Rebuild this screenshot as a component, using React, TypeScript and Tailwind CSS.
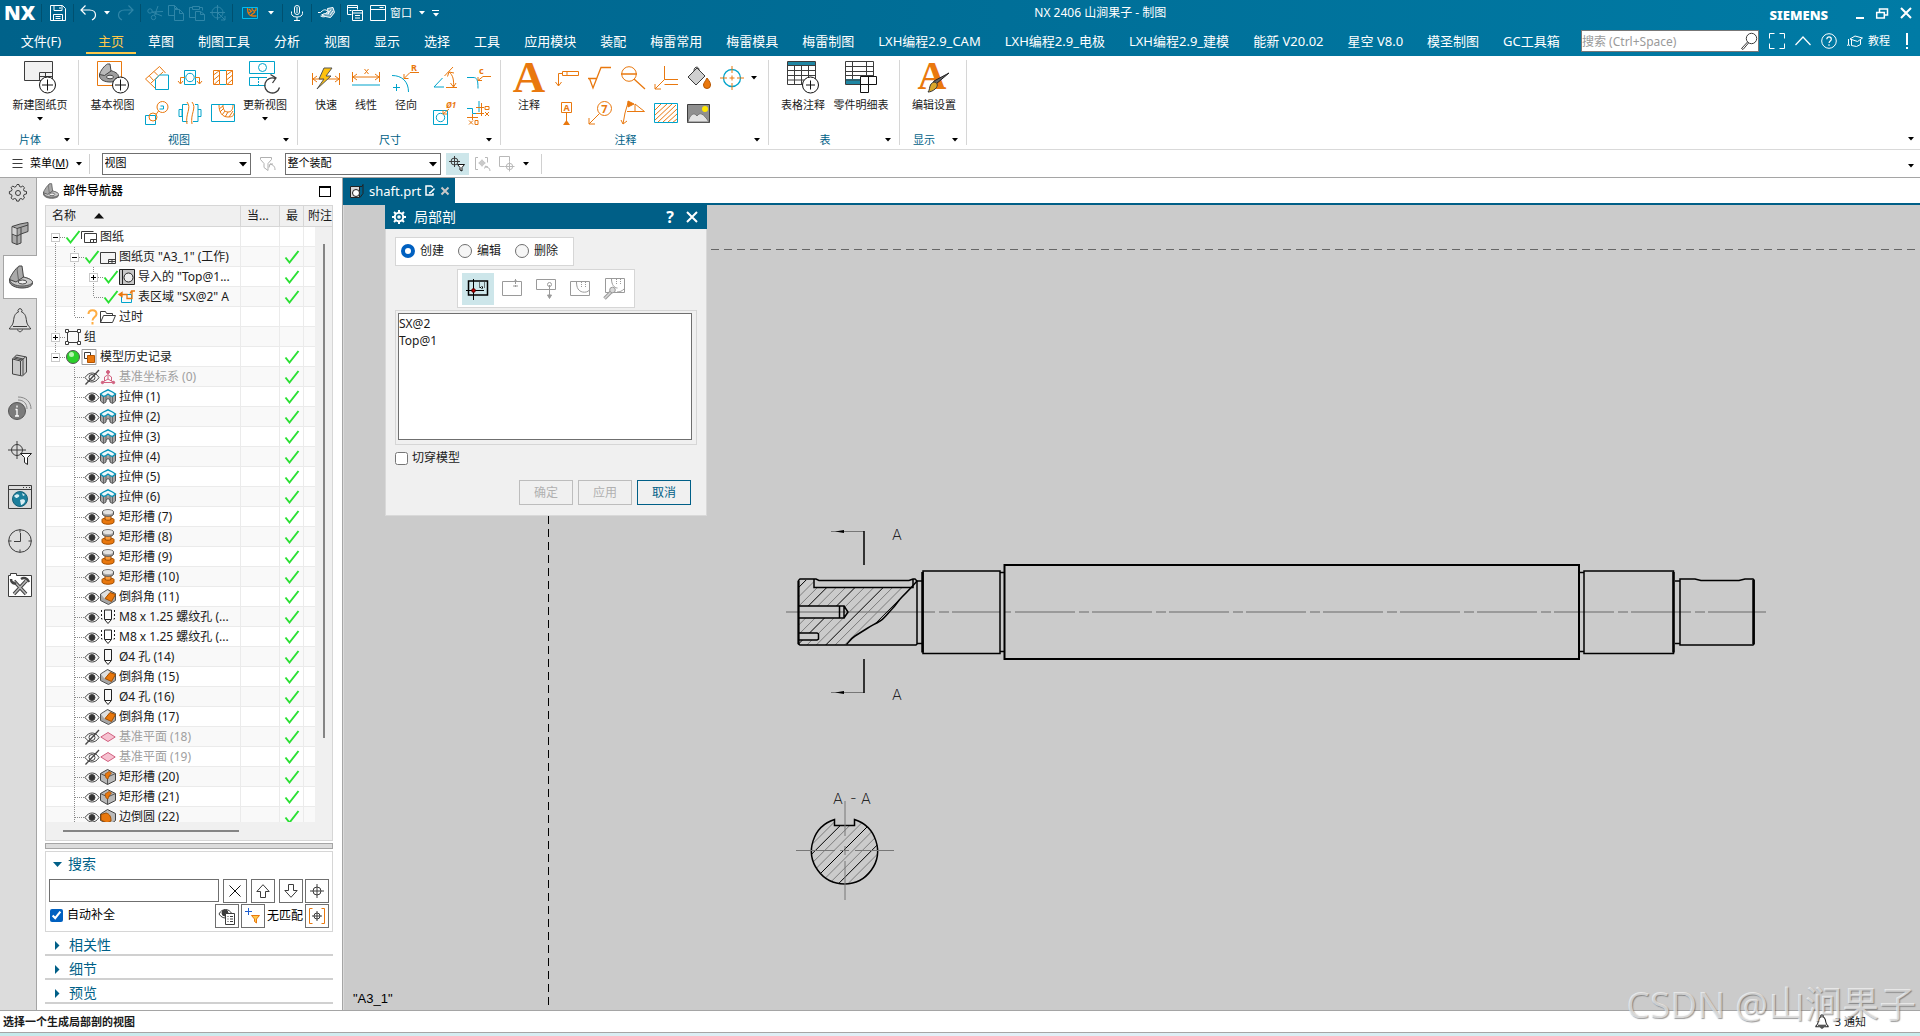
import type { ReactNode } from "react";
import clsx from "clsx";

const OR = "#e9780e";
const CY = "#00a3cb";
const DK = "#3c3c3c";

type IconProps = {
  w?: number;
  h?: number;
  stroke?: string;
  sw?: number;
  className?: string;
  children: ReactNode;
};

function Icon({ w = 16, h = w, stroke = DK, sw = 1, className, children }: IconProps) {
  return (
    <svg
      width={w}
      height={h}
      viewBox={`0 0 ${w} ${h}`}
      fill="none"
      stroke={stroke}
      strokeWidth={sw}
      className={clsx("shrink-0 overflow-visible", className)}
      aria-hidden
    >
      {children}
    </svg>
  );
}

function Caret({ className = "text-black" }: { className?: string }) {
  return (
    <svg width="6" height="4" viewBox="0 0 6 4" className={clsx("shrink-0", className)} aria-hidden>
      <path d="M0 0h6L3 3.6z" fill="currentColor" />
    </svg>
  );
}

/* ---------- Title bar ---------- */

const Sep = () => <span className="h-[18px] w-px shrink-0 bg-[#00506f]" />;

const SaveIcon = () => (
  <Icon stroke="#fff">
    <path d="M.5.5h12l3 3v12H.5zM4 .5v5h8v-5M3.5 15.5v-6h9v6M5.5 11.5h5M5.5 13.5h5M10 2v2" />
  </Icon>
);
const UndoIcon = () => (
  <Icon stroke="#fff" sw={1.2}>
    <path d="M5.5.5 1 5l4.5 4.5M1 5h8.500c4 0 6 2.500 6 5s-1.500 4-3.500 5" />
  </Icon>
);
const RedoIcon = () => (
  <Icon stroke="#2f86a8" sw={1.2}>
    <path d="M10.5.5 15 5l-4.500 4.500M15 5H6.500c-4 0-6 2.500-6 5s1.500 4 3.500 5" />
  </Icon>
);
const CutIcon = () => (
  <Icon stroke="#2f86a8">
    <circle cx="3" cy="6" r="2.2" />
    <circle cx="6.5" cy="12.5" r="2.2" />
    <path d="m5 7 11-.5M7.500 10.500 11 1M5 7l10 4M9 7v3" />
  </Icon>
);
const CopyIcon = () => (
  <Icon stroke="#2f86a8">
    <path d="M6.500 10.500h-6V.5h6l3 3v1M6.500.5v3h3M6.500 4.500h5l4 4v7h-9zM11.500 4.500v4h4" />
  </Icon>
);
const PasteIcon = () => (
  <Icon stroke="#2f86a8">
    <path d="M6.500 12.500h-6v-10h3M10.500 2.500h3v3M3.500 1.500h7v3h-7zM6.500 6.500h5l4 3v6h-9zM11.500 6.500v3h4" />
  </Icon>
);
const TargetIcon = () => (
  <Icon stroke="#2f86a8">
    <circle cx="7.5" cy="7.5" r="5.5" />
    <path d="M7.500 0v15M0 7.500h15M8 8l7 7M15 11v4h-4" />
  </Icon>
);
const SectionIcon = () => (
  <Icon w={16} h={12}>
    <path d="M.5.5h15v11H.5z" stroke="#00bdf2" />
    <path d="M5.500 1c0 6 2 8 5 8h4M10 1c0 3 3 4 4 2V1M7 2l2 2M7 6l3-2M9 8l4-3" stroke={OR} strokeWidth="1.3" />
  </Icon>
);
const MicIcon = () => (
  <Icon w={12} h={16} stroke="#fff">
    <rect x="3.5" y=".5" width="5" height="9" rx="2.5" />
    <path d="M.5 6.500v2c0 2 2 3.500 5.500 3.500s5.500-1.500 5.500-3.500v-2M6 12v3M3 15.500h6M5 3h2M5 5h2M5 7h2" />
  </Icon>
);
const TouchIcon = () => (
  <Icon w={17} h={14} stroke="#fff">
    <path d="M0 6.500h2.500C5 4 6 3.500 8 4l2.500 1.500L8 7M2.500 10c2 1 3 1 5 .5" />
    <path d="m9.500 2.500 5.500-1 1.500 5-4 5-5-1-4-1.500 3-1.500 4 .5z" fill="#ffffff66" />
    <path d="m10 8 3-4.500M12 9l3-4" />
  </Icon>
);
const CascadeIcon = () => (
  <Icon stroke="#fff">
    <path d="M4.500 9.500h-4V.5h10v4M.5 2.500h10M5.500 5.500h10v10h-10zM5.500 8h10M8 10.500h5M2.500 5.500h2M8 13h5" />
  </Icon>
);
const WindowIcon = () => (
  <Icon stroke="#fff">
    <path d="M.5.5h15v15H.5zM.5 4.500h15M9.500 2.500h4" />
  </Icon>
);

function TitleButton({ label, children }: { label: string; children: ReactNode }) {
  return (
    <button aria-label={label} className="flex h-5 shrink-0 items-center justify-center">
      {children}
    </button>
  );
}

function TitleBar() {
  return (
    <div className="flex h-[26px] items-center pr-2 pl-1 text-white">
      <span className="w-[37px] text-[20px] leading-[26px] font-black">NX</span>
      <Sep />
      <div className="flex w-[31px] justify-center"><TitleButton label="保存"><SaveIcon /></TitleButton></div>
      <Sep />
      <div className="flex w-[66px] items-center justify-between px-[6px]">
        <TitleButton label="撤消"><UndoIcon /></TitleButton>
        <Caret className="text-white" />
        <TitleButton label="重做"><RedoIcon /></TitleButton>
      </div>
      <Sep />
      <div className="flex w-[91px] items-center justify-between px-[6px]">
        <TitleButton label="剪切"><CutIcon /></TitleButton>
        <TitleButton label="复制"><CopyIcon /></TitleButton>
        <TitleButton label="粘贴"><PasteIcon /></TitleButton>
        <TitleButton label="移动"><TargetIcon /></TitleButton>
      </div>
      <Sep />
      <div className="flex w-[49px] items-center justify-center gap-[10px]">
        <TitleButton label="局部剖"><SectionIcon /></TitleButton>
        <Caret className="text-white" />
      </div>
      <Sep />
      <div className="flex w-[28px] justify-center"><TitleButton label="语音"><MicIcon /></TitleButton></div>
      <Sep />
      <div className="flex w-[28px] justify-center"><TitleButton label="触控"><TouchIcon /></TitleButton></div>
      <Sep />
      <div className="flex items-center gap-[7px] pl-[6px]">
        <TitleButton label="层叠"><CascadeIcon /></TitleButton>
        <button className="flex items-center gap-1 text-[11px] leading-4">
          <WindowIcon />
          窗口
        </button>
        <Caret className="text-white" />
        <button aria-label="自定义" className="flex flex-col items-center gap-[2px]">
          <span className="h-px w-[7px] bg-white" />
          <Caret className="text-white" />
        </button>
      </div>
      <h1 className="flex-1 pr-2 text-center text-xs leading-4">NX 2406 山涧果子 - 制图</h1>
      <span className="mr-7 pt-1 text-[13px] leading-4 font-black">SIEMENS</span>
      <div className="flex items-center gap-3">
        <button aria-label="最小化" className="flex h-3 w-2 items-end"><span className="h-[2px] w-2 bg-white" /></button>
        <button aria-label="还原">
          <Icon w={12} h={11} stroke="#fff" sw={1.5}>
            <path d="M3.500 4V1h8v6h-3M.7 4.500h7.600v5.500H.7z" />
          </Icon>
        </button>
        <button aria-label="关闭">
          <Icon w={12} h={12} stroke="#fff" sw={2}>
            <path d="m1 1 10 10M11 1 1 11" />
          </Icon>
        </button>
      </div>
    </div>
  );
}

const TABS = [
  "主页", "草图", "制图工具", "分析", "视图", "显示", "选择", "工具", "应用模块", "装配",
  "梅雷常用", "梅雷模具", "梅雷制图", "LXH编程2.9_CAM", "LXH编程2.9_电极", "LXH编程2.9_建模",
  "能新 V20.02", "星空 V8.0", "模圣制图", "GC工具箱",
];

function MenuTabs() {
  return (
    <div className="flex h-[30px] text-[13px] leading-[30px] text-white">
      <button className="w-[82px] shrink-0">文件(F)</button>
      <nav className="ml-1 flex whitespace-nowrap">
        {TABS.map((t, i) => (
          <a
            key={t}
            href="#"
            className={clsx("h-7 px-3", i === 0 && "border-b-2 border-[#ffc84a] text-[#ffc84a]")}
          >
            {t}
          </a>
        ))}
      </nav>
      <div className="ml-auto flex items-center gap-[10px] pr-3 text-[11px]">
        <label className="flex h-[22px] w-[178px] items-center border border-[#777] bg-white">
          <input
            aria-label="搜索"
            placeholder="搜索 (Ctrl+Space)"
            className="h-5 w-0 flex-1 text-xs text-black outline-none placeholder:text-[#9a9a9a]"
          />
          <Icon w={18}>
            <circle cx="11.5" cy="6.5" r="5.2" />
            <path d="m7.500 10-6 6.500 1.500 1L8.500 11" />
          </Icon>
        </label>
        <button aria-label="全屏">
          <Icon stroke="#fff"><path d="M.5 5.500v-5h5M10.500.5h5v5M15.500 10.500v5h-5M5.500 15.500h-5v-5" /></Icon>
        </button>
        <button aria-label="折叠">
          <Icon stroke="#fff" sw={1.2}><path d="m.5 12 7.500-8 7.500 8" /></Icon>
        </button>
        <button aria-label="帮助">
          <Icon stroke="#fff">
            <circle cx="8" cy="8" r="7.3" />
            <path d="M5.800 6.200c0-3 4.500-3 4.500 0 0 1.800-2.200 1.800-2.200 3.800M8 11.200v1.500" strokeWidth="1.2" />
          </Icon>
        </button>
        <button className="flex items-center gap-[5px]">
          <Icon stroke="#fff">
            <path d="m3 6 5-3 7.500 2-5 3.500zM4.500 7v5.500l5 1 4-2V7M1.500 6v5M.5 13l1-2 1 2" />
          </Icon>
          教程
        </button>
        <span className="ml-[6px] flex flex-col items-center gap-[2px]" aria-label="提示">
          <span className="h-3 w-[2px] bg-white" />
          <span className="size-[2px] bg-white" />
        </span>
      </div>
    </div>
  );
}

/* ---------- Ribbon icons ---------- */

const NewSheetIcon = () => (
  <Icon w={32}>
    <path d="M.5.5h28v19H.5z" fill="#f1f1f1" />
    <path d="M15.500 19.500v-8h13M15.500 15.500h13M21.500 11.500v8" />
    <circle cx="23.5" cy="24" r="8" fill="#fff" stroke="#111" />
    <path d="M18 24h11M23.500 18.500v11" stroke="#111" />
  </Icon>
);
const BaseViewIcon = () => (
  <Icon w={32}>
    <path d="M.5.5h24v24H.5z" stroke={OR} />
    <path d="M13.500 9.500c4 1 8 3 8 6 0 4-4 5.500-8.500 5.500-5 0-10-2-10.500-6v-2z" fill="#9d9d9d" stroke="#444" />
    <path d="M2.500 13.500c1-4 5-9 8-10.500h2.500l1 7-6.500 4.500z" fill="#b9b9b9" stroke="#444" />
    <ellipse cx="13" cy="16" rx="3.5" ry="1.8" fill="#eee" stroke="#444" />
    <circle cx="23.5" cy="24" r="8" fill="#fff" stroke="#111" />
    <path d="M18 24h11M23.500 18.500v11" stroke="#111" />
  </Icon>
);
const UpdateViewIcon = () => (
  <Icon w={32} stroke={CY}>
    <path d="M.5.5h25v12H.5zM18 16.500H.5v8h16" />
    <circle cx="13.5" cy="6.500" r="4" />
    <path d="M9.500 17v8" strokeDasharray="2 1" />
    <path d="M26 17.500a7.500 7.500 0 1 0 4.500 9M21.500 13.500l5.500 3.500-3.500 5" stroke={DK} strokeWidth="1.3" />
  </Icon>
);
const RapidDimIcon = () => (
  <Icon w={32} stroke={OR}>
    <path d="M2.500 12v12M29.500 12v12M3 18h26M7 15l-4 3 4 3M25 15l4 3-4 3" />
    <path d="m14 7-5 11h5l-7 10 14-13h-5l6-8z" fill="#ffc20e" stroke="#555" />
  </Icon>
);
const LinearDimIcon = () => (
  <Icon w={32} stroke={OR}>
    <path d="M2.500 11v10M29.500 11v10M3 16h26M7 13l-4 3 4 3M25 13l4 3-4 3M14.500 8l4 5M18.500 8l-4 5" />
    <path d="M2 24h28" stroke={CY} />
  </Icon>
);
const RadialDimIcon = () => (
  <Icon w={32} stroke={OR}>
    <path d="M2 14.500c10 0 16.500 6 16.500 16.500M3 26.500h7M6.500 23v7" stroke={CY} />
    <path d="M29 11.500h-9l-6 6M14 13v4.500h4.500" />
    <text x="21" y="10" fontSize="9" fontWeight="700" fill={OR} stroke="none">R</text>
  </Icon>
);
const NoteIcon = () => (
  <Icon w={32}>
    <text x="16" y="30.5" textAnchor="middle" fontSize="45" className="font-[Liberation_Serif]" fontWeight="700" fill={OR} stroke="none">A</text>
  </Icon>
);
const TableNoteIcon = () => (
  <Icon w={32}>
    <path d="M.5.5h28v23H.5z" fill="#fff" />
    <path d="M1 1h27v3H1z" fill="#1f86a3" stroke="none" />
    <path d="M.5 4.500h28M.5 9.500h28M.5 14.500h28M.5 19h28M7.500 4v19M14.500 4v19M21.500 4v19" />
    <circle cx="23.5" cy="24" r="8" fill="#fff" stroke="#111" />
    <path d="M19 24h9M23.500 19.500v9" stroke="#111" />
  </Icon>
);
const PartsListIcon = () => (
  <Icon w={32}>
    <path d="M.5.5h28v23H.5z" fill="#fff" />
    <path d="M1 18h15v5H1z" fill="#1f86a3" stroke="none" />
    <path d="M.5 5.500h28M.5 10.500h28M.5 14.500h28M.5 19h15M7.500 0v18M21.500 0v14" />
    <path d="M15.500 15.500h16v8h-8v8h-8zM15.500 23.500h8M23.500 15.500v8" fill="#fff" stroke="#111" />
  </Icon>
);
const EditSettingsIcon = () => (
  <Icon w={32}>
    <text x="14" y="27.5" textAnchor="middle" fontSize="40" className="font-[Liberation_Serif]" fontWeight="700" fill={OR} stroke="none">A</text>
    <path d="m31 12-13 11-3-1 1-2z" fill="#666" stroke="#222" />
    <path d="M17 21c3 1 3 5 0 7-2 2-5 3-7 3 2-2 1-5 3-8 1-1 2-2 4-2z" fill="#d9a72b" stroke="#333" />
  </Icon>
);

const VIEW_ICONS: ReactNode[] = [
  <>
    <path d="M10.500 22.500.5 13 14.500.5l6 6.500M4.500 10l4 4.500M9 5.500l4 4M6 17l12-11" stroke={OR} />
    <path d="M10.500 13.500l4-4.500h9v14.500h-13z" stroke={CY} fill="#fff" />
  </>,
  <>
    <path d="M6.500 4.500h11v14h-11z" stroke={CY} />
    <circle cx="12" cy="11.5" r="4.2" stroke={CY} />
    <path d="M7 11.500H2.500v6M17 11.500h4.500v6M0 15l2.500 3L5 15M19 15l2.500 3 2.500-3" stroke={OR} />
  </>,
  <>
    <path d="M2.500 4.500h6v14h-6zM15.500 4.500h6v14h-6zM2.500 9l6-4.500M2.500 14l6-5M3 18.500l5.500-5M15.500 9l6-4.500M15.500 14l6-5M16 18.500l5.500-5" stroke={OR} />
    <path d="M9 4.500h6M9 18.500h6" stroke={CY} />
  </>,
  <>
    <path d="M.5 14.500h10v9H.5z" stroke={CY} />
    <circle cx="17.5" cy="6" r="5.5" stroke={OR} />
    <circle cx="8" cy="16" r="4" stroke={OR} />
    <path d="m11 13.500 2.500-3.500" stroke={OR} />
    <path d="M14.500 8h4V5h-3" stroke={CY} />
  </>,
  <>
    <path d="M1 8.500h3v7H1zM4.500 3.500h5M4.500 3.500v17h5M17 3.500h3v17h-5M20 8.500h3v7h-3" stroke={CY} />
    <path d="M9 1c5 6-2 12 0 22M14 1c5 6-2 12 0 22" stroke={OR} />
  </>,
  <>
    <path d="M.5 3.500h23v17H.5z" stroke={CY} />
    <path d="M8 4c0 7 3 12 9 12 4 0 6-1 6-4M12 4c0 5 2 7 5 7s5-2 5-7M8 8l4-3M9 11l4-4M11 14l3-4M14 16l3-5M18 16l4-6" stroke={OR} />
  </>,
];

const DIM_ICONS: ReactNode[] = [
  <>
    <path d="M9.500 12 1 21h10" stroke={CY} />
    <path d="M13 21.500h11M11.500 10 20 1M16 6c4 3 5 8 4.500 15M14.500 10.500 16 6l5 1M17.500 17l3 4 2.500-4" stroke={OR} />
  </>,
  <>
    <path d="M0 11.500h6c4 0 5 2 5 11" stroke={CY} />
    <path d="M24 10.500h-8l-5 4M11 11v3.500h4" stroke={OR} />
    <text x="12" y="8" fontSize="9" fontWeight="700" fill={OR} stroke="none">c</text>
  </>,
  <>
    <path d="M.5 9.500h14v14H.5z" stroke={CY} />
    <circle cx="7.5" cy="16.5" r="4.2" stroke={CY} />
    <path d="m10 13 6-5M10 9.500V13h4" stroke={OR} />
    <text x="13" y="7" fontSize="8" fontWeight="700" fontStyle="italic" fill={OR} stroke="none">Ø1</text>
  </>,
  <>
    <path d="M0 7.500h5.500v5h5M12 0v11" stroke={CY} />
    <path d="M9 6.500h8M9 12.500h8M14.500 2v13M0 16.500h11M5.500 13v6M2 19.500l4 4M6 19.500l-4 4M8 19.500h3v4H8zM18 5.500h4v3h-4zM18 11l4 4M22 11l-4 4" stroke={OR} />
  </>,
];

const NOTE_ICONS: ReactNode[] = [
  <><path d="M7.500 5.500h16v4h-16zM12 5.500v4M7.500 7.500h-4v12M.5 16l3 4 3-4" stroke={OR} /></>,
  <><path d="M0 12.500h9M1.500 12.500 5 22 13 1.500h10" stroke={OR} strokeWidth="1.3" /></>,
  <><circle cx="8" cy="8" r="7.3" stroke={OR} /><path d="M0 8h16M13 13l11 10" stroke={OR} strokeWidth="1.3" /></>,
  <><path d="M10.500 0v13.500H24M10.500 18.500H24M10.500 13.500 1 23M1 18v5h6" stroke={OR} /></>,
  <>
    <path d="M1 11 10 2l8 8-9 9z" fill="#cfcfcf" stroke={DK} />
    <path d="M7 5C7 0 12 0 12 4" stroke={DK} />
    <path d="M20 12c3 4 3.500 5 3.500 7a3.500 3.500 0 0 1-7 0c0-2 1.500-3 3.500-7z" fill={OR} stroke="#b65500" />
  </>,
  <>
    <circle cx="12" cy="12" r="8.5" stroke={CY} strokeWidth="1.3" />
    <path d="M12 0v7M12 17v7M0 12h7M17 12h7M12 9.500v5M9.500 12h5" stroke={OR} />
  </>,
  <>
    <path d="M6.500 1.500h10v10h-10zM11.500 11.500v9" stroke={OR} />
    <path d="M11.500 19 15 24H8z" fill={OR} stroke="none" />
    <text x="11.5" y="10" textAnchor="middle" fontSize="9" fontWeight="700" fill={OR} stroke="none">A</text>
  </>,
  <>
    <circle cx="16.5" cy="7.5" r="7" stroke={OR} />
    <path d="M11.500 12.500 1 23M1 17v6h6" stroke={OR} />
    <text x="16.5" y="11.5" textAnchor="middle" fontSize="11" fontWeight="700" fill={OR} stroke="none">7</text>
  </>,
  <>
    <path d="M7.500 0 4 12l-2 11M0 19l2 4 4-3M6 10.500h17.500L14 3v7" stroke={OR} />
    <path d="m7 0 6 3-6 3z" fill={OR} stroke={OR} />
  </>,
  <>
    <path d="M1 14 13 3M1 19 18 3M3 22 22 4M8 22 23 8M13 22l10-9M18 22l5-4M1 9l6-6" stroke={OR} />
    <path d="M.5 2.500h23v19H.5z" stroke={CY} />
  </>,
  <>
    <path d="M.5 3.500h22v18H.5z" fill="#8f8f8f" stroke={DK} />
    <circle cx="18" cy="8" r="3" fill="#ffe600" stroke="none" />
    <path d="M1 21c2-8 6-10 9-6 3-4 6-3 12 6z" fill="#e2e2e2" stroke="#777" />
  </>,
];

function BigButton({ label, icon, caret, className }: { label: string; icon: ReactNode; caret?: boolean; className?: string }) {
  return (
    <button className={clsx("flex shrink-0 flex-col items-center pt-px text-[11px] leading-4 whitespace-nowrap text-[#1a1a1a]", className)}>
      {icon}
      <span className="mt-1">{label}</span>
      {caret && <span className="mt-1"><Caret /></span>}
    </button>
  );
}

function IconGrid({ icons, label, className }: { icons: ReactNode[]; label: string; className?: string }) {
  return (
    <div className={clsx("grid auto-rows-[35px]", className)}>
      {icons.map((ic, i) => (
        <button key={i} aria-label={`${label} ${i + 1}`} className="flex items-center justify-center">
          <Icon w={24}>{ic}</Icon>
        </button>
      ))}
    </div>
  );
}

function Group({ label, className, children }: { label: string; className?: string; children: ReactNode }) {
  return (
    <section className="flex h-full shrink-0 flex-col pt-1">
      <div className={clsx("flex h-[70px] items-start border-r border-[#d6d6d6]", className)}>{children}</div>
      <div className="flex h-[15px] items-center border-r border-[#d6d6d6] pr-2">
        <span className="flex-1 pt-1 pr-1 text-center text-[11px] leading-4 text-[#005f87]">{label}</span>
        <button aria-label={`${label}选项`} className="pt-1"><Caret /></button>
      </div>
    </section>
  );
}

function Ribbon() {
  return (
    <div className="flex h-[94px] border-b border-[#d9d9d9] bg-white">
      <Group label="片体" className="w-[79px] justify-center pl-[2px]">
        <BigButton label="新建图纸页" icon={<NewSheetIcon />} caret />
      </Group>
      <Group label="视图" className="pr-[6px] pl-[6px]">
        <BigButton label="基本视图" icon={<BaseViewIcon />} className="w-[55px]" />
        <IconGrid icons={VIEW_ICONS} label="视图" className="grid-cols-[33px_33px_33px]" />
        <BigButton label="更新视图" icon={<UpdateViewIcon />} caret className="w-[52px]" />
      </Group>
      <Group label="尺寸" className="pr-1 pl-2">
        <BigButton label="快速" icon={<RapidDimIcon />} className="w-10" />
        <BigButton label="线性" icon={<LinearDimIcon />} className="w-10" />
        <BigButton label="径向" icon={<RadialDimIcon />} className="w-10" />
        <IconGrid icons={DIM_ICONS} label="尺寸" className="ml-[2px] grid-cols-[34px_34px]" />
      </Group>
      <Group label="注释" className="pr-2 pl-[7px]">
        <BigButton label="注释" icon={<NoteIcon />} className="w-[42px]" />
        <IconGrid icons={NOTE_ICONS} label="注释" className="grid-cols-[33px_33px_33px_33px_33px_33px]" />
        <button aria-label="更多中心标记" className="flex h-[35px] w-3 items-center justify-center"><Caret /></button>
      </Group>
      <Group label="表" className="pr-2 pl-[6px]">
        <BigButton label="表格注释" icon={<TableNoteIcon />} className="w-[56px]" />
        <BigButton label="零件明细表" icon={<PartsListIcon />} className="w-[60px]" />
      </Group>
      <Group label="显示" className="pr-1 pl-[6px]">
        <BigButton label="编辑设置" icon={<EditSettingsIcon />} className="w-[56px]" />
      </Group>
      <button aria-label="功能区选项" className="mt-auto mr-[6px] mb-2 ml-auto"><Caret /></button>
    </div>
  );
}

function Combo({ label, value, className }: { label: string; value: string; className?: string }) {
  return (
    <div className={clsx("relative h-[22px]", className)}>
      <select aria-label={label} className="h-full w-full appearance-none border border-[#6f6f6f] bg-white pl-[2px] text-[11px] text-black">
        <option>{value}</option>
      </select>
      <svg width="8" height="5" className="pointer-events-none absolute top-[9px] right-1" aria-hidden>
        <path d="M0 0h8L4 4.500z" fill="#000" />
      </svg>
    </div>
  );
}

function SelectionBar() {
  return (
    <div className="flex h-7 items-center border-b border-[#a5a5a5] bg-white pl-3 text-[11px] text-black">
      <button className="flex items-center gap-[7px]">
        <Icon w={11} h={9}><path d="M.5.5h10M.5 4.500h10M.5 8.500h10" /></Icon>
        <span>菜单(<u>M</u>)</span>
        <Caret />
      </button>
      <span className="mr-3 ml-[7px] h-5 w-px bg-[#d0d0d0]" />
      <Combo label="过滤器" value="视图" className="w-[149px]" />
      <Icon stroke="#b0b0b0" className="mx-[9px]">
        <path d="M.5 1.500h11v2L8 7.500v7l-4-3v-4L.5 3.500zM10 8c3 1 5 2 5 6M9 11.500 10 8l3 0" />
      </Icon>
      <Combo label="范围" value="整个装配" className="w-[156px]" />
      <button aria-label="选择过滤" className="ml-[5px] flex h-[22px] w-[23px] items-center justify-center bg-[#cde6ea]">
        <Icon>
          <circle cx="5.5" cy="5.5" r="3.5" />
          <path d="M5.500 0v11M0 5.500h11" />
          <path d="M8.500 8.500h7l-2.500 3v3.500l-2-1v-2.500z" fill="#fff" stroke="#111" />
        </Icon>
      </button>
      <Icon stroke="#b8b8b8" className="ml-[6px]">
        <path d="M3 1.500H.5v12H3M10 1.500h2.500v5M3.500 7h7M7 3.500v7M10 11c3 0 5 1 5 4M9.500 12.500l1-2.500 2.500 1" />
        <circle cx="7" cy="7" r="2.2" />
      </Icon>
      <Icon stroke="#b8b8b8" className="mr-2 ml-2">
        <path d="M5.500 10.500h-5v-10h10v5M5.500 10.500h10M10.500 5.500v10" />
        <circle cx="10.5" cy="10.5" r="3.2" />
      </Icon>
      <button aria-label="更多"><Caret /></button>
      <span className="ml-[12px] h-5 w-px bg-[#d0d0d0]" />
      <button aria-label="边框条选项" className="mr-[6px] ml-auto pt-1"><Caret /></button>
    </div>
  );
}

/* ---------- Resource rail ---------- */

const BracketShape = () => (
  <>
    <path d="M14 12c5 1 9.500 3 9.500 6s-4.500 5-10.500 5S1 20.500.5 16.500V14z" fill="#8c8c8c" stroke="#444" />
    <path d="M14 12c5 1 9.500 3 9.500 5s-4.500 4-10.500 4S2 19 .8 15z" fill="#c9c9c9" stroke="#555" />
    <path d="M.5 14.500C2 10 6.500 3.500 10 1h3l1.500 11L7 17z" fill="#a9a9a9" stroke="#444" />
    <path d="M10 1 8 4l1.500 11" stroke="#666" />
    <ellipse cx="13.5" cy="17" rx="4.2" ry="2" fill="#eee" stroke="#444" />
  </>
);

const BellShape = () => (
  <path d="M10.500 3a2 2 0 1 1 3 0c4 1.500 4.500 5 5 9 .5 3 1.500 5 4 7v1h-21v-1c2.500-2 3.500-4 4-7 .5-4 1-7.500 5-9zM5 17.500h14M9.500 20.500c1 3 4 3 5 0" />
);

const RAIL: { label: string; icon: ReactNode }[] = [
  {
    label: "装配导航器",
    icon: (
      <>
        <path d="M4 5.500 12 3l8-1.500v9L13 13v9l-4 1.500-5-2V13z" fill="#a9a9a9" stroke="#444" />
        <path d="m4 5.500 5 2L20 4M9 7.500v16M4 13l5 2 4-2M13 13V6.500" stroke="#444" />
        <path d="m4.500 6.200 4 1.600v6.500l-4-1.600z" fill="#d4d4d4" stroke="none" />
      </>
    ),
  },
  { label: "部件导航器", icon: <BracketShape /> },
  { label: "通知", icon: <BellShape /> },
  {
    label: "重用库",
    icon: (
      <>
        <path d="m4.500 6 4-4 10 2v15l-4 4-10-2z" fill="#c9c9c9" stroke="#444" />
        <path d="m4.500 6 8 2 5-4M12.500 8v14M7 4l8 2v16M6 5l8 2" stroke="#444" />
      </>
    ),
  },
  {
    label: "HD3D",
    icon: (
      <>
        <circle cx="9" cy="14" r="8.5" fill="#7b7b7b" stroke="#555" />
        <path d="M9 8.500v2M9 12v7M7.500 12.500H9M7 19h4" stroke="#fff" strokeWidth="1.3" />
        <path d="M10 3c6 0 9 4 9 9M10 0c8 0 13 5 13 12" stroke="#888" />
      </>
    ),
  },
  {
    label: "选择过滤器",
    icon: (
      <>
        <circle cx="9" cy="9" r="5.5" />
        <path d="M9 0v18M0 9h18" />
        <path d="M12.500 12.500h11l-4 4v7l-3-2v-5z" fill="#fff" stroke="#222" />
      </>
    ),
  },
  {
    label: "浏览器",
    icon: (
      <>
        <path d="M.5.5h23v23H.5zM.5 4.500h23M15 2.500h1M18 2.500h1M21 2.500h1" />
        <circle cx="12" cy="14" r="7.5" fill="#1c7f9c" stroke="#155f76" />
        <path d="M6 11c2-2 4-2 5-1s-1 3-3 3zM12 15c2-1 5-1 5 1s-3 4-4 4zM14 8l3 2-2 1zM8 16l2 3" fill="#d9eef3" stroke="none" />
      </>
    ),
  },
  {
    label: "历史记录",
    icon: (
      <>
        <circle cx="12" cy="12" r="11.3" />
        <path d="M12.500 4v8.500H6M12 .5v3M12 20.500v3M.5 12h3M20.500 12h3" />
      </>
    ),
  },
  {
    label: "工具",
    icon: (
      <>
        <path d="M.5 2.500h2v-2h6v2h15v21H.5z" fill="#fff" />
        <path d="m6 8 12 13M18 8 6 21" stroke="#444" strokeWidth="3.5" />
        <path d="m6 8 12 13M18 8 6 21" stroke="#b5b5b5" strokeWidth="1.5" />
        <path d="M3 6c0 4 3 5 5 4M13 6c3-2 6-1 8 3" stroke="#444" strokeWidth="2.5" />
      </>
    ),
  },
];

function Rail() {
  return (
    <aside className="flex w-[37px] shrink-0 flex-col border-r border-[#a5a5a5] bg-[#dcdcdc]">
      <button aria-label="设置" className="flex h-[33px] items-center justify-center pb-1">
        <Icon w={18}>
          <circle cx="9" cy="9" r="2.5" />
          <path d="m7.500 1.500.5-1h2l.5 2 1.500.6L13.800 2l1.700 1.700-1 1.800.6 1.500 2.400.5v2.400l-2.400.6-.6 1.500 1 1.900-1.700 1.600-1.800-1-1.500.6-.5 2H7.700l-.6-2-1.500-.6-1.900 1-1.600-1.600 1-1.900-.7-1.500-2-.6V7.500l2-.5.7-1.500-1-1.800L3.700 2l1.900 1.100L7 2.500z" />
        </Icon>
      </button>
      {RAIL.map((r, i) => (
        <button
          key={r.label}
          aria-label={r.label}
          className={clsx(
            "flex h-11 shrink-0 items-center justify-center",
            i === 1 ? "-mr-px ml-[3px] border-y border-l border-[#a5a5a5] bg-white" : "pl-[3px]",
          )}
        >
          <Icon w={24}>{r.icon}</Icon>
        </button>
      ))}
    </aside>
  );
}

/* ---------- Part navigator ---------- */

type Guide = "none" | "line" | "tee" | "end" | "top-minus" | "minus" | "last-minus" | "plus";
type Status = "check" | "question" | "ball" | "eye" | "hidden";
type Kind =
  | "sheets" | "sheet" | "view" | "section" | "folder" | "group" | "history" | "csys" | "extrude"
  | "groove" | "chamfer" | "thread" | "hole" | "plane" | "slot" | "blend";
type Row = { text: string; guides: Guide[]; status?: Status; kind: Kind; ok?: boolean };

const feature = (text: string, kind: Kind, status: Status = "eye"): Row => ({
  text, kind, status, guides: ["none", "tee"], ok: true,
});

const ROWS: Row[] = [
  { text: "图纸", guides: ["top-minus"], status: "check", kind: "sheets" },
  { text: '图纸页 "A3_1" (工作)', guides: ["line", "minus"], status: "check", kind: "sheet", ok: true },
  { text: '导入的 "Top@1...', guides: ["line", "line", "plus"], status: "check", kind: "view", ok: true },
  { text: '表区域 "SX@2" A', guides: ["line", "line", "end"], status: "check", kind: "section", ok: true },
  { text: "过时", guides: ["line", "end"], status: "question", kind: "folder" },
  { text: "组", guides: ["plus"], kind: "group" },
  { text: "模型历史记录", guides: ["last-minus"], status: "ball", kind: "history", ok: true },
  feature("基准坐标系 (0)", "csys", "hidden"),
  feature("拉伸 (1)", "extrude"),
  feature("拉伸 (2)", "extrude"),
  feature("拉伸 (3)", "extrude"),
  feature("拉伸 (4)", "extrude"),
  feature("拉伸 (5)", "extrude"),
  feature("拉伸 (6)", "extrude"),
  feature("矩形槽 (7)", "groove"),
  feature("矩形槽 (8)", "groove"),
  feature("矩形槽 (9)", "groove"),
  feature("矩形槽 (10)", "groove"),
  feature("倒斜角 (11)", "chamfer"),
  feature("M8 x 1.25 螺纹孔 (...", "thread"),
  feature("M8 x 1.25 螺纹孔 (...", "thread"),
  feature("Ø4 孔 (14)", "hole"),
  feature("倒斜角 (15)", "chamfer"),
  feature("Ø4 孔 (16)", "hole"),
  feature("倒斜角 (17)", "chamfer"),
  feature("基准平面 (18)", "plane", "hidden"),
  feature("基准平面 (19)", "plane", "hidden"),
  feature("矩形槽 (20)", "slot"),
  feature("矩形槽 (21)", "slot"),
  feature("边倒圆 (22)", "blend"),
];

function GuideCell({ type }: { type: Guide }) {
  const up = type !== "none" && type !== "top-minus";
  const down = type === "line" || type === "tee" || type === "top-minus" || type === "plus" || type === "minus";
  const box = type.endsWith("minus") || type === "plus";
  return (
    <svg width="19" height="20" className="shrink-0" fill="none" stroke="#8a8a8a" aria-hidden>
      {up && <path d="M9.500 0v10" strokeDasharray="1 1" />}
      {down && <path d="M9.500 10v10" strokeDasharray="1 1" />}
      {type !== "none" && type !== "line" && <path d="M10 10.500h9" strokeDasharray="1 1" />}
      {box && (
        <>
          <rect x="5.5" y="6.5" width="8" height="8" fill="#fff" stroke="#c8c8c8" />
          <path d="M7 10.500h5" stroke="#000" />
          {type === "plus" && <path d="M9.500 8v5" stroke="#000" />}
        </>
      )}
    </svg>
  );
}

const Check = ({ className }: { className?: string }) => (
  <Icon w={16} stroke="#2be034" sw={2} className={className}>
    <path d="m1.500 8.500 4 5L14.500 2" />
  </Icon>
);

function StatusIcon({ status }: { status: Status }) {
  if (status === "check") return <Check />;
  if (status === "question")
    return (
      <Icon w={16} stroke="#ffad42" sw={2}>
        <path d="M4.500 5c0-5 8-5 8 0 0 3-4 3-4 6.500M8.500 13v2.500" />
      </Icon>
    );
  if (status === "ball")
    return (
      <Icon w={16}>
        <circle cx="8" cy="8" r="6.5" fill="#2bd02b" stroke="#555" />
        <circle cx="6.5" cy="5.500" r="2.5" fill="#b6f5b0" stroke="none" />
      </Icon>
    );
  return (
    <Icon w={16} stroke="#444">
      <path d="M1 8.500c4-6 10.500-6 14 0-3.500 6-10 6-14 0z" />
      <circle cx="8" cy="8.5" r="3" fill={status === "eye" ? "#333" : "none"} />
      {status === "hidden" && <path d="M1.500 15.500 15 1" strokeWidth="1.3" />}
    </Icon>
  );
}

const KIND_ICONS: Record<Kind, ReactNode> = {
  sheets: <><path d="M.5 10V2.500h12" /><path d="M3.500 4.500h12v9h-12zM9.500 13.500v-3h6M12.500 10.500v3" fill="#fff" /></>,
  sheet: <path d="M.5 3.500h15v11H.5zM8.500 14.500v-4h7M8.500 12.500h7M12 10.500v4" fill="#f4f4f4" />,
  view: <><path d="M.5.5h15v15H.5z" fill="#c8c8c8" stroke="#222" /><circle cx="9.5" cy="8.5" r="4.5" fill="#eee" stroke="#222" /><path d="M3.500 1v14" stroke="#222" /></>,
  section: <><path d="M2.500 5.500h10v8h-10z" stroke={CY} /><path d="M0 5.500h8v4h5V2.500M0 5.500l3-2v4zM11 4.500l1.500-2.500H16" stroke={OR} strokeWidth="1.3" /></>,
  folder: <path d="M.5 13.500v-11h5l1 2h6v2M.5 13.500l3-7h12l-3 7z" fill="#fff" />,
  group: <><path d="M2 2.500h12M2 13.500h12M2.500 2v12M13.500 2v12" /><path d="M.5.5h3v3h-3zM12.500.5h3v3h-3zM.5 12.500h3v3h-3zM12.500 12.500h3v3h-3z" fill="#fff" /></>,
  history: <><path d="M1 .5h14v15H1z" stroke="#999" /><path d="M3.500 3.500h6v6h-6z" fill="#fff" /><path d="M6.500 6.500h7v7h-7z" fill={OR} stroke="#b65500" /></>,
  csys: <g stroke="#d1607f"><circle cx="8" cy="3" r="1.5" fill="#d1607f" /><path d="M8 3v7L2 13.500M8 10l6 3.500M4.500 12V8l3-2M11.500 12V8l-3-2M4 13.500h8" /><circle cx="2.5" cy="13.5" r="1.2" fill="#d1607f" /><circle cx="13.5" cy="13.5" r="1.2" fill="#d1607f" /></g>,
  extrude: (
    <>
      <path d="M.5 5v7l3 2.500 2.500-1.500v-2l2-1.500 2 1.500v2l2.500 1.500 3-2.500V5z" fill="#a6a6a6" stroke="#555" />
      <path d="M3.500 7.500v7M6 6.500v5M10 6.500v5M12.500 7.500v7" stroke="#666" />
      <path d="M.5 5 3.500 3 8 .8 12.500 3l3 2-3 2.500-2.500-1-2-1.500-2 1.500-2.500 1z" fill="#eef8fb" stroke="#0092b8" strokeWidth="1.3" />
    </>
  ),
  groove: (
    <>
      <path d="M2 10.500c0-2 12-2 12 0V13c0 3-12 3-12 0z" fill={OR} stroke="#a34f00" />
      <path d="M5 5h6v5.500c-1.500 1-4.500 1-6 0z" fill="#f79a3e" stroke="#a34f00" />
      <path d="M2.500 3c0-3 11-3 11 0v2c0 3-11 3-11 0z" fill="#a8a8a8" stroke="#555" />
      <ellipse cx="8" cy="3" rx="5" ry="2" fill="#e4e4e4" stroke="none" />
    </>
  ),
  chamfer: <><path d="m.5 5 7-4.500 8 4v7l-7 4-8-4z" fill="#a6a6a6" stroke="#555" /><path d="m1 5.200 6.500-4 3.500 2-6 7z" fill="#e0e0e0" stroke="none" /><path d="m5 9.500 5-6 5.500 2-4 7z" fill={OR} stroke="#a34f00" /></>,
  thread: <><path d="M4.500 1v9.500h7V1zM5 11l3 3.500 3-3.500" stroke="#222" /><path d="M1.500 1v9h3M14.500 1v9h-3" stroke="#222" strokeDasharray="2 2" /></>,
  hole: <path d="M4.500.5h7v11h-7zM5 12l3 3.500 3-3.500" stroke="#222" />,
  plane: <path d="m.8 8 7.200-4.500L15.200 8 8 12.500z" fill="#f6c1d0" stroke="#d1607f" />,
  slot: <><path d="m.5 4.500 7-4 8 4v7l-8 4-7-4z" fill="#b9b9b9" stroke="#444" /><path d="m.5 4.500 7 3.500 8-3.500M7.500 8v7.500" stroke="#555" /><path d="m5 5 4-2.500 2.500 1.500L9 7 8 10 6 9z" fill={OR} stroke="#a34f00" strokeWidth=".7" /></>,
  blend: <><path d="m.5 5 7-4.500 8 4v7l-5 4-10-4z" fill="#b9b9b9" stroke="#444" /><path d="M1 5.500 6 4c4 1 5 4 5 8l-4 2-6-3z" fill={OR} stroke="#a34f00" /></>,
};

function TreeTable() {
  return (
    <div className="relative flex min-h-0 flex-1 flex-col border border-[#d6d6d6] bg-[#f0f0f0]">
      <div className="min-h-0 flex-1 overflow-hidden">
        <table className="w-full table-fixed border-separate border-spacing-0 text-xs whitespace-nowrap text-[#1a1a1a]">
          <colgroup>
            <col />
            <col className="w-[39px]" />
            <col className="w-6" />
            <col className="w-7" />
          </colgroup>
          <thead>
            <tr className="bg-[#f0f0f0] text-left leading-5">
              <th className="border-r border-b border-[#d6d6d6] pl-[6px] font-normal">
                <span className="flex items-center gap-[18px]">
                  名称
                  <svg width="10" height="6" aria-hidden><path d="M0 5.500h10L5 0z" fill="#111" /></svg>
                </span>
              </th>
              <th className="border-r border-b border-[#d6d6d6] pl-[6px] font-normal">当...</th>
              <th className="border-r border-b border-[#d6d6d6] pl-[6px] font-normal">最</th>
              <th className="overflow-hidden border-b border-[#d6d6d6] pl-1 font-normal">附注</th>
            </tr>
          </thead>
          <tbody>
            {ROWS.map((r, i) => (
              <tr key={i} className={i % 2 ? "bg-[#f9f9f9]" : "bg-white"}>
                <td className="border-r border-b border-[#ebebeb] p-0">
                  <div className="flex h-[19px] items-center overflow-hidden">
                    {r.guides.map((g, k) => <GuideCell key={k} type={g} />)}
                    {r.status && <StatusIcon status={r.status} />}
                    <Icon w={16}>{KIND_ICONS[r.kind]}</Icon>
                    <span className={clsx("pl-[3px] leading-[19px]", r.status === "hidden" && "text-[#a0a0a0]")}>{r.text}</span>
                  </div>
                </td>
                <td className="border-r border-b border-[#ebebeb] p-0" />
                <td className="border-r border-b border-[#ebebeb] p-0 pl-1">{r.ok && <Check />}</td>
                <td className="border-b border-[#ebebeb] p-0" />
              </tr>
            ))}
          </tbody>
        </table>
      </div>
      <div className="h-[18px] shrink-0 pt-2 pr-[93px] pl-[17px]">
        <div className="h-[2px] bg-[#858585]" />
      </div>
      {/* vertical scrollbar sits over the last column */}
      <div className="absolute top-[21px] right-0 bottom-0 w-[17px] bg-[#f0f0f0] pt-[17px] pb-[102px] pl-2">
        <div className="h-full w-[2px] bg-[#858585]" />
      </div>
    </div>
  );
}

function SquareButton({ label, children, className }: { label: string; children: ReactNode; className?: string }) {
  return (
    <button aria-label={label} className={clsx("flex size-6 shrink-0 items-center justify-center border border-[#6f6f6f] bg-white", className)}>
      {children}
    </button>
  );
}

function PartNavigator() {
  return (
    <aside className="flex w-[306px] shrink-0 flex-col border-r border-[#a5a5a5] bg-white pr-[9px] pb-[6px] pl-2">
      <div className="flex h-[27px] shrink-0 items-center justify-between pr-[2px] pb-px text-xs font-medium text-black">
        <span className="flex items-center gap-1">
          <svg width="16" height="16" viewBox="0 0 24 24" fill="none" className="-ml-[2px]" aria-hidden><BracketShape /></svg>
          部件导航器
        </span>
        <button aria-label="最大化" className="h-[11px] w-3 border border-t-2 border-black" />
      </div>
      <TreeTable />
      <div className="my-[2px] h-[6px] shrink-0 border border-[#a5a5a5] bg-[#dcdcdc]" />
      <section className="h-[81px] shrink-0 border border-[#d6d6d6] px-[3px] text-xs">
        <button className="flex h-[27px] items-center gap-[6px] pb-[3px] pl-1 text-sm text-[#005f87]">
          <svg width="9" height="5" aria-hidden><path d="M0 0h9L4.500 5z" fill="#005f87" /></svg>
          搜索
        </button>
        <div className="flex items-start">
          <input aria-label="搜索内容" className="mr-1 h-[23px] w-0 flex-1 border border-[#6f6f6f] bg-white px-1 outline-none" />
          <SquareButton label="清除" className="mr-1"><Icon w={12}><path d="m.5.5 11 11M11.500.5l-11 11" stroke="#111" /></Icon></SquareButton>
          <SquareButton label="上一个" className="mr-1"><Icon w={14}><path d="M7 .7.8 7.500h3.700v6h5v-6h3.700z" /></Icon></SquareButton>
          <SquareButton label="下一个" className="mr-[2px]"><Icon w={14}><path d="M7 13.300.8 6.500h3.700v-6h5v6h3.700z" /></Icon></SquareButton>
          <SquareButton label="定位"><Icon w={14}><circle cx="7" cy="7" r="4" /><path d="M7 0v14M0 7h14" /></Icon></SquareButton>
        </div>
        <div className="mt-px flex items-center">
          <label className="mr-auto flex items-center gap-1 pb-[2px] pl-px leading-4">
            <input type="checkbox" defaultChecked className="size-[13px] accent-[#0060c0]" />
            自动补全
          </label>
          <SquareButton label="显示选项" className="mr-[2px]">
            <Icon w={18}>
              <path d="M1 7C4 1 11 1 14 7M1 7c2 3 4 4 7 4" />
              <circle cx="7" cy="6" r="3" fill={DK} />
              <path d="M7.500 6.500h9v11h-9zM9.500 9.500h1M12 9.500h3M9.500 12h1M12 12h3M9.500 14.500h1M12 14.500h3" fill="#fff" />
            </Icon>
          </SquareButton>
          <SquareButton label="添加过滤">
            <Icon w={16}>
              <path d="M3.500 0v7M0 3.500h7" stroke="#1f5fd0" />
              <path d="M6.500 7.500h8l-3 3.500v4l-2-1.500V11z" fill="#ffc94a" stroke={OR} />
            </Icon>
          </SquareButton>
          <span className="px-[2px]">无匹配</span>
          <SquareButton label="聚焦">
            <Icon w={16}>
              <path d="M3.500.5h-3v15h3M12.500.5h3v15h-3" stroke={OR} />
              <circle cx="8" cy="8" r="3" />
              <path d="M8 3v10M3 8h10" />
            </Icon>
          </SquareButton>
        </div>
      </section>
      {["相关性", "细节", "预览"].map((t) => (
        <button key={t} className="flex h-6 shrink-0 items-center gap-[9px] border-b-2 border-[#d0d0d0] pt-1 pl-[10px] text-sm leading-5 text-[#005f87]">
          <svg width="5" height="9" aria-hidden><path d="M0 0v9l4.500-4.500z" fill="#005f87" /></svg>
          {t}
        </button>
      ))}
    </aside>
  );
}

/* ---------- Drawing area ---------- */

function Hatch({ from, to, black, y0, y1 }: { from: number; to: number; black: number; y0: number; y1: number }) {
  const step = 9.4;
  const first = Math.ceil((from - black) / step);
  const last = Math.floor((to - black) / step);
  const lines: ReactNode[] = [];
  for (let k = first; k <= last; k++) {
    const s = black + k * step;
    lines.push(
      <line key={k} x1={s - y0} y1={y0} x2={s - y1} y2={y1} stroke={k % 3 === 0 ? "#000" : "#7d7d7d"} />,
    );
  }
  return <>{lines}</>;
}

/** Shaft sheet, drawn in window pixels and shifted to the canvas origin. */
function ShaftDrawing() {
  return (
    <svg className="absolute inset-0 h-full w-full" fill="none" stroke="#000" aria-label="轴零件图">
      <defs>
        <clipPath id="cut">
          <path d="M799 580h15v8h99l-11 9-10 12-12 12-13 7-12 8-8 9h-48zM799 606v12h45l4-6-4-6zM799 633v7h19v-7z" clipRule="evenodd" />
        </clipPath>
        <clipPath id="disc">
          <path d="M834.500 819.500v6h20v-6a33 33 0 1 1-20 0z" />
        </clipPath>
      </defs>
      <g transform="translate(-344 -205)">
        <path d="M711 249.500h1209" stroke="#666" strokeDasharray="8 5" />
        <path d="M548.500 516v494" strokeDasharray="8 5" />

        {/* section marks */}
        <path d="M831 531.500h33M831 692.500h33" stroke="#777" />
        <path d="M864 531v34M864 659v34" strokeWidth="1.5" />
        <path d="m835 531.500 9-1.500v3zM835 692.500l9-1.500v3z" fill="#000" stroke="none" />
        <g fill="#000" stroke="none" fontSize="15" fontWeight="200" className="font-[Inter]">
          <text x="892" y="540">A</text>
          <text x="892" y="700">A</text>
          <text x="833" y="804">A</text>
          <text x="850" y="803">-</text>
          <text x="861" y="804">A</text>
        </g>

        {/* centre line */}
        <path d="M786 612h149M939 612h10M952 612h48M1005 612h6" stroke="#8a8a8a" strokeWidth="1.5" />
        <path d="M1015 612h751" stroke="#8a8a8a" strokeWidth="1.5" strokeDasharray="60 4 10 3" />

        {/* broken-out end */}
        <g clipPath="url(#cut)">
          <Hatch from={1370} to={1510} black={1470.7} y0={575} y1={650} />
        </g>
        <g strokeWidth="1.5">
          <path d="M814 579h-14l-1.500 1.500V644l1.500 1h116l1-1v-63l-2-2h-2l-4 1.500h-90l-3-1.500zM814 579v8.500h99V579" />
          <path d="M917 581c-5 6-10 11-15 16s-6 8-10 12-7 9-12 12-9 5-13 7.500-8 5-12 7.500-6 6-8.500 8.500" />
          <path d="M799 606h45v12h-45M839.500 606v12M844 606l4 6-4 6" />
          <path d="M799 633h18l1.500 1v5l-1.500 1h-18" />
          <path d="M798.500 581v63" strokeWidth="2" />
          <path d="M917 581h5M917 643.500h5" />
        </g>

        {/* steps */}
        <g strokeWidth="1.5">
          <path d="M923 571h77v82.500h-77z" />
          <path d="M922.500 572v80.500" strokeWidth="2.5" />
          <path d="M1000 572.500h4M1000 651.500h4" />
          <path d="M1004.500 565h574.500v94h-574.500z" strokeWidth="2" />
          <path d="M1579 572.500h5M1579 651.500h5" />
          <path d="M1584 571h89.500v82.500H1584z" />
          <path d="M1673.500 572v80.500" strokeWidth="2.5" />
          <path d="M1675 581h5M1675 643.500h5" />
          <path d="M1680 645v-66h15l6 1.500h38l6-1.500h8l1 1v64l-1 1z" />
          <path d="M1753.500 580v64" strokeWidth="2.5" />
        </g>

        {/* section A-A */}
        <g clipPath="url(#disc)">
          <Hatch from={1640} to={1750} black={1694} y0={815} y1={885} />
        </g>
        <path d="M834.500 819.500v6h20v-6a33 33 0 1 1-20 0z" strokeWidth="1.5" />
        <path d="M796 850.500h39M840 850.500h9M855 850.500h39M845 801v35M845 846v9M845 861v39" stroke="#777" />
      </g>
    </svg>
  );
}

const TOOLS: { label: string; icon: ReactNode }[] = [
  {
    label: "选择视图",
    icon: (
      <>
        <path d="M2.500 3h19v14h-19z" stroke="#000" strokeWidth="1.5" />
        <path d="M0 12.500h18M7.500 1v21" stroke="#000" />
        <path d="M13.500 4.500v5M18.500 4.500v5M16 8v3M14 9.500h4" stroke="#000" strokeDasharray="1 1" />
        <path d="M6 11h3v3H6z" fill="#c00" stroke="#600" />
      </>
    ),
  },
  {
    label: "指出基点",
    icon: <><path d="M2.500 3.500h19v14h-19z" /><path d="M15.500 1v9M13 4l2.500-2.500L18 4M13 8h5" strokeDasharray="2 1" /></>,
  },
  {
    label: "指出拉伸矢量",
    icon: <><path d="M2.500 1.500h19v10h-19z" /><circle cx="15.5" cy="6.5" r="2" /><path d="M15.500 7v11" /><path d="M13.500 17h4l-2 3.500z" fill="#9a9a9a" /></>,
  },
  {
    label: "选择曲线",
    icon: <><path d="M2.500 3.500h19v14h-19z" /><path d="M8.500 4c0 6 2 9 6 10 3 .5 5 0 7-2" /><path d="M13.500 4v5M17.500 4v5" strokeDasharray="1 1" /></>,
  },
  {
    label: "修改边界曲线",
    icon: (
      <>
        <path d="M3.500.5h19v14h-19zM9.500 1c0 6 3 9 6 9M15 14c3 0 5-1 7-3" />
        <path d="M14.500 1v5M18.500 1v5" strokeDasharray="1 1" />
        <path d="m2.500 20.500 7-7" strokeWidth="3.5" />
        <path d="m2.500 20.500 7-7" stroke="#d8d8d8" strokeWidth="1.5" />
        <circle cx="10.5" cy="12" r="2.8" fill="#d8d8d8" />
      </>
    ),
  },
];

function SectionDialog() {
  return (
    <div role="dialog" aria-label="局部剖" className="absolute top-0 left-[41px] w-[322px] bg-[#f0f0f0] text-xs text-[#1a1a1a]">
      <div className="flex h-6 items-center bg-[#005f87] pr-[9px] pl-[7px] text-sm leading-5 text-white">
        <Icon w={14} stroke="#fff" sw={2}>
          <circle cx="7" cy="7" r="4.2" />
          <path d="M7 0v2.500M7 11.500V14M0 7h2.500M11.500 7H14M2 2l2 2M10 10l2 2M12 2l-2 2M4 10l-2 2" />
          <circle cx="7" cy="7" r=".8" />
        </Icon>
        <h2 className="mr-auto ml-2">局部剖</h2>
        <button aria-label="帮助" className="mr-3 text-base font-bold">?</button>
        <button aria-label="关闭">
          <Icon w={12} stroke="#fff" sw={2}><path d="m1 1 10 10M11 1 1 11" /></Icon>
        </button>
      </div>
      <div className="border border-t-0 border-[#d9d9d9] px-[9px] pt-2 pb-[10px]">
        <div className="flex h-[29px] w-[179px] items-center gap-[14px] border border-[#d6d6d6] bg-white pb-[2px] pl-[5px]">
          {["创建", "编辑", "删除"].map((t, i) => (
            <label key={t} className="flex items-center gap-[5px] leading-4">
              <input
                type="radio"
                name="mode"
                defaultChecked={i === 0}
                className="size-[14px] appearance-none rounded-full border border-[#6f6f6f] bg-[#f6f6f6] checked:border-4 checked:border-[#0060c0] checked:bg-white"
              />
              {t}
            </label>
          ))}
        </div>
        <div className="mx-auto mt-[3px] flex h-[39px] w-[178px] items-center gap-[2px] border border-[#d6d6d6] bg-white pl-1">
          {TOOLS.map((t, i) => (
            <button key={t.label} aria-label={t.label} className={clsx("flex size-8 items-center justify-center", i === 0 && "bg-[#cde6ea]")}>
              <Icon w={24} h={22} stroke="#9a9a9a">{t.icon}</Icon>
            </button>
          ))}
        </div>
        <div className="mt-[2px] h-[135px] border border-[#d6d6d6] pt-[2px] pr-1 pb-1 pl-[2px]">
          <select size={7} aria-label="视图列表" className="h-[127px] w-full overflow-hidden border border-[#6f6f6f] bg-white pt-px text-xs outline-none">
            <option className="h-[17px] p-0 leading-[17px]">SX@2</option>
            <option className="h-[17px] p-0 leading-[17px]">Top@1</option>
          </select>
        </div>
        <label className="mt-[5px] flex items-center gap-1 leading-4">
          <input type="checkbox" className="size-[13px]" />
          切穿模型
        </label>
        <div className="mt-[14px] flex justify-end gap-[5px] pr-[6px]">
          <button className="h-[25px] w-[54px] border border-[#bdbdbd] text-[#b0b0b0]" disabled>确定</button>
          <button className="h-[25px] w-[54px] border border-[#bdbdbd] text-[#b0b0b0]" disabled>应用</button>
          <button className="h-[25px] w-[54px] border border-[#005f87] text-[#005f87]">取消</button>
        </div>
      </div>
    </div>
  );
}

function Canvas() {
  return (
    <main className="flex min-w-0 flex-1 flex-col">
      <div className="flex h-[27px] border-b-2 border-[#005f87] bg-white">
        <div className="flex w-[112px] items-center bg-[#005f87] pl-[7px] text-[13px] leading-4 text-white">
          <Icon w={14} h={16}>
            <path d="M.5 3.500h9v11h-9z" fill="#d8d8d8" stroke="#222" />
            <path d="M2 3.500h10l1-2v9l-3 4" stroke="#222" />
            <circle cx="6" cy="10" r="3.5" fill="#fff" stroke="#222" />
          </Icon>
          <span className="mr-1 ml-[5px]">shaft.prt</span>
          <Icon w={10} h={11} stroke="#fff" sw={1.5}>
            <path d="M8 8v2H1V1h5l2 1.500M9.500 3.500 5.500 7.500l-1.500.5" />
          </Icon>
          <button aria-label="关闭 shaft.prt" className="ml-[6px]">
            <Icon w={8} stroke="#c8c8c8" sw={2}><path d="m.5.5 7 7M7.500.5l-7 7" /></Icon>
          </button>
        </div>
      </div>
      <div className="relative min-h-0 flex-1 overflow-hidden border-l border-[#dadada] bg-[#cbcbcb]">
        <ShaftDrawing />
        <SectionDialog />
        <span className="absolute bottom-[3px] left-[9px] font-[Liberation_Sans] text-[13px] leading-4 text-black">"A3_1"</span>
      </div>
    </main>
  );
}

function StatusBar() {
  return (
    <footer className="shrink-0">
      <div className="flex h-[23px] items-center justify-between border-t border-b border-[#a5a5a5] bg-white pr-[54px] pl-[3px] text-[11px] leading-4 text-[#1a1a1a]">
        <span className="font-bold">选择一个生成局部剖的视图</span>
        <button className="flex items-center gap-[6px]">
          <svg width="14" height="16" viewBox="0 0 24 24" fill="none" stroke="#222" strokeWidth="1.8" aria-hidden><BellShape /></svg>
          3 通知
        </button>
      </div>
      <div className="h-[3px] bg-linear-to-r from-[#c5eaeb] via-[#e4f0f8] to-[#c8ecec]" />
    </footer>
  );
}

export default function App() {
  return (
    <div className="relative flex h-screen flex-col overflow-hidden bg-white font-['Noto_Sans','Noto_Sans_CJK_SC',sans-serif]">
      <header className="shrink-0">
        <div className="bg-linear-to-r from-[#00628a] to-[#007ba5]">
          <TitleBar />
          <MenuTabs />
        </div>
        <Ribbon />
        <SelectionBar />
      </header>
      <div className="flex min-h-0 flex-1">
        <Rail />
        <PartNavigator />
        <Canvas />
      </div>
      <StatusBar />
      <span className="pointer-events-none absolute right-1 bottom-3 text-[37px] leading-10 text-white/60 [text-shadow:1px_1px_1px_rgba(90,90,90,0.6)]">
        CSDN @山涧果子
      </span>
    </div>
  );
}
